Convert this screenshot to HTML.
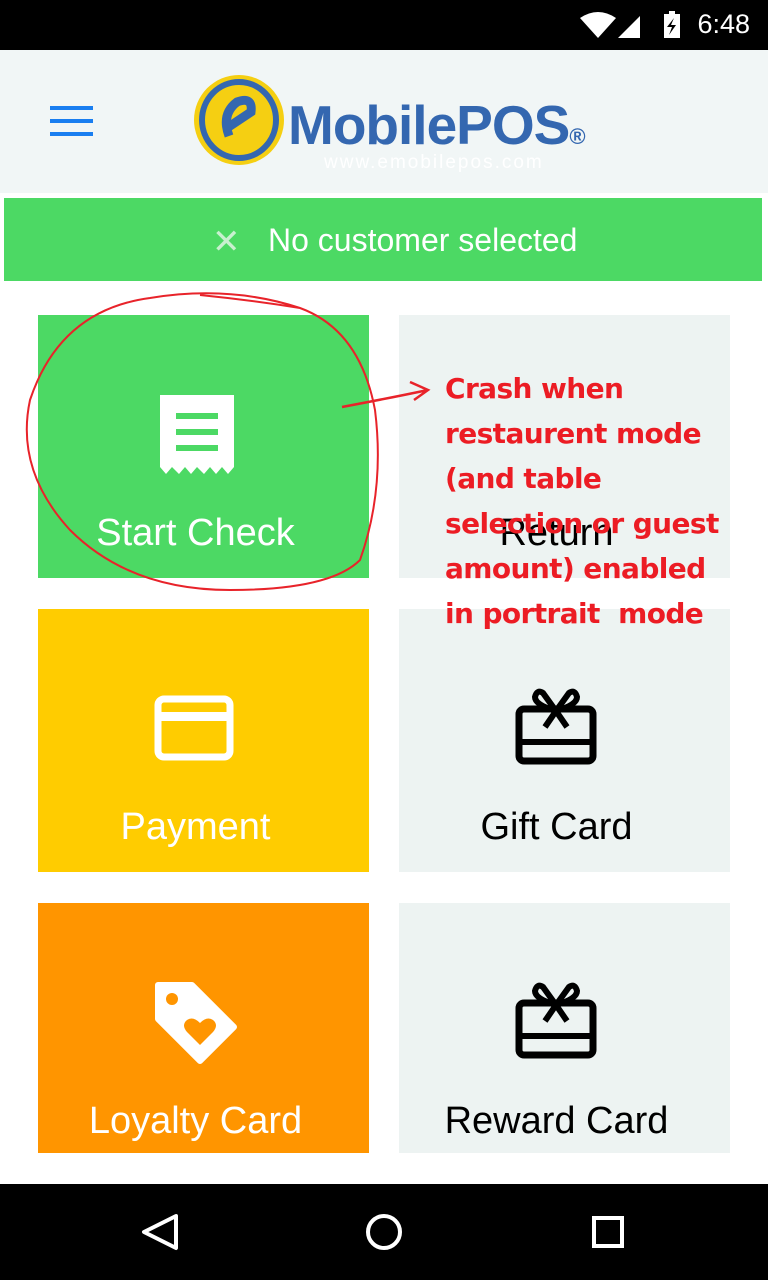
<!DOCTYPE html>
<html><head><style>
*{margin:0;padding:0;box-sizing:border-box}
body{width:768px;height:1280px;background:#fff;position:relative;overflow:hidden;font-family:"Liberation Sans",sans-serif}
.abs{position:absolute}
.tile{position:absolute;width:331px;text-align:center;font-size:38px}
.tile .lbl{position:absolute;left:0;right:16px}
</style></head><body>
<div class="abs" style="left:0;top:0;width:768px;height:50px;background:#000"></div>
<div class="abs" style="right:18px;top:9px;color:#fff;font-size:27px">6:48</div>
<svg class="abs" style="left:578px;top:10px" width="110" height="30">
<path d="M2 8 Q20 -4 38 8 L20 28 Z" fill="#fff"/>
<path d="M40 28 L62 6 L62 28 Z" fill="#fff"/>
<rect x="86" y="4" width="16" height="24" fill="#fff"/><rect x="91" y="1" width="6" height="4" fill="#fff"/>
<path d="M96 8 L89 17 L94 17 L91 25 L98 15 L93 15 Z" fill="#000"/>
</svg>
<div class="abs" style="left:0;top:50px;width:768px;height:143px;background:#f1f6f6"></div>
<div class="abs" style="left:50px;top:106px;width:43px;height:4px;background:#1a7ef0"></div>
<div class="abs" style="left:50px;top:119px;width:43px;height:4px;background:#1a7ef0"></div>
<div class="abs" style="left:50px;top:132px;width:43px;height:4px;background:#1a7ef0"></div>
<svg class="abs" style="left:193px;top:74px" width="100" height="92">
<ellipse cx="46" cy="46" rx="45" ry="45" fill="#f5cf12"/>
<ellipse cx="46" cy="46" rx="37" ry="38" fill="none" stroke="#3467b0" stroke-width="6"/>
<path d="M36 62 Q28 40 44 28 Q60 22 58 38 L34 54" fill="none" stroke="#3467b0" stroke-width="9"/>
</svg>
<div class="abs" style="left:288px;top:93px;font-size:55px;font-weight:bold;color:#3467b0;letter-spacing:-1px">MobilePOS<span style="font-size:22px">®</span></div>
<div class="abs" style="left:324px;top:152px;font-size:19px;color:#fff;letter-spacing:2px">www.emobilepos.com</div>
<div class="abs" style="left:4px;top:198px;width:758px;height:83px;background:#4cd964"></div>
<div class="abs" style="left:212px;top:222px;font-size:34px;color:#c8f0cf">✕</div>
<div class="abs" style="left:268px;top:222px;font-size:32px;color:#fff">No customer selected</div>

<div class="tile" style="left:38px;top:315px;height:263px;background:#4cd964;color:#fff">
<svg class="abs" style="left:122px;top:80px" width="74" height="82"><path d="M0 0 H74 V72 L68 79 L62 72 L56 79 L50 72 L44 79 L37 72 L31 79 L25 72 L19 79 L12 72 L6 79 L0 72 Z" fill="#fff"/><rect x="16" y="18" width="42" height="6" fill="#4cd964"/><rect x="16" y="34" width="42" height="6" fill="#4cd964"/><rect x="16" y="50" width="42" height="6" fill="#4cd964"/></svg>
<div class="lbl" style="top:197px">Start Check</div></div>
<div class="tile" style="left:399px;top:315px;height:263px;background:#edf3f2;color:#000">
<div class="lbl" style="top:197px">Return</div></div>
<div class="tile" style="left:38px;top:609px;height:263px;background:#ffcc00;color:#fff">
<svg class="abs" style="left:116px;top:86px" width="82" height="66"><rect x="4" y="4" width="72" height="58" rx="6" fill="none" stroke="#fff" stroke-width="7"/><rect x="4" y="17" width="72" height="9" fill="#fff"/></svg>
<div class="lbl" style="top:197px">Payment</div></div>
<div class="tile" style="left:399px;top:609px;height:263px;background:#edf3f2;color:#000">
<svg class="abs" style="left:116px;top:78px" width="84" height="80"><rect x="4" y="22" width="74" height="52" rx="5" fill="none" stroke="#000" stroke-width="7"/><rect x="4" y="52" width="74" height="6" fill="#000"/><path d="M41 24 L28 6 Q22 2 20 10 Q20 18 41 24 Q62 18 62 10 Q60 2 54 6 Z M41 24 L30 40 M41 24 L52 40" fill="none" stroke="#000" stroke-width="6"/></svg>
<div class="lbl" style="top:197px">Gift Card</div></div>
<div class="tile" style="left:38px;top:903px;height:250px;background:#ff9500;color:#fff">
<svg class="abs" style="left:116px;top:78px" width="84" height="84"><path d="M4 4 H38 L80 46 L46 80 L4 38 Z" fill="#fff" stroke="#fff" stroke-width="6" stroke-linejoin="round"/><circle cx="18" cy="18" r="6" fill="#ff9500"/><path d="M46 64 L33 51 Q27 44 33 39 Q39 35 46 42 Q53 35 59 39 Q65 44 59 51 Z" fill="#ff9500"/></svg>
<div class="lbl" style="top:197px">Loyalty Card</div></div>
<div class="tile" style="left:399px;top:903px;height:250px;background:#edf3f2;color:#000">
<svg class="abs" style="left:116px;top:78px" width="84" height="80"><rect x="4" y="22" width="74" height="52" rx="5" fill="none" stroke="#000" stroke-width="7"/><rect x="4" y="52" width="74" height="6" fill="#000"/><path d="M41 24 L28 6 Q22 2 20 10 Q20 18 41 24 Q62 18 62 10 Q60 2 54 6 Z M41 24 L30 40 M41 24 L52 40" fill="none" stroke="#000" stroke-width="6"/></svg>
<div class="lbl" style="top:197px">Reward Card</div></div>

<svg class="abs" style="left:0;top:290px" width="768" height="320">
<path d="M300 18 Q230 -5 150 8 Q60 20 30 110 Q15 180 70 240 Q130 300 230 300 Q330 300 360 270 Q385 200 375 120 Q360 40 300 18 Q250 10 200 5" fill="none" stroke="#e8232a" stroke-width="2"/>
<path d="M342 117 Q390 108 428 100 M410 92 L428 100 L414 110" fill="none" stroke="#e8232a" stroke-width="2.5"/>
</svg>
<div class="abs" style="left:445px;top:366px;font-size:28px;line-height:45px;font-weight:bold;color:#ec1c24;font-family:'DejaVu Sans',sans-serif;letter-spacing:-0.6px;white-space:pre">Crash when
restaurent mode
(and table
selection or guest
amount) enabled
in portrait  mode</div>

<div class="abs" style="left:0;top:1184px;width:768px;height:96px;background:#000"></div>
<svg class="abs" style="left:0;top:1184px" width="768" height="96">
<path d="M176 32 L144 48 L176 64 Z" fill="none" stroke="#fff" stroke-width="4" stroke-linejoin="round"/>
<circle cx="384" cy="48" r="16" fill="none" stroke="#fff" stroke-width="4"/>
<rect x="594" y="34" width="28" height="28" fill="none" stroke="#fff" stroke-width="4"/>
</svg>
</body></html>
